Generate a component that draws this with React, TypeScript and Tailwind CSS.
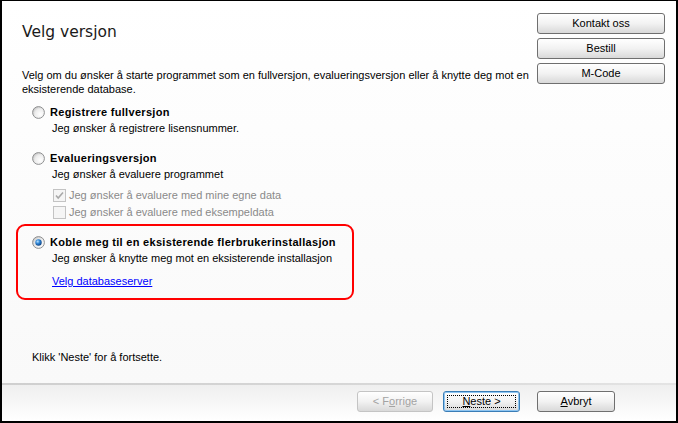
import React from "react";

const FONT = { fontFamily: '"Liberation Sans", Arial, sans-serif' };

function Radio({ checked, id }: { checked?: boolean; id: string }) {
  return (
    <svg width="13" height="13" viewBox="0 0 13 13" className="shrink-0">
      <defs>
        <radialGradient id={`rf-${id}`} cx="65%" cy="65%" r="75%">
          <stop offset="0" stopColor="#ffffff" />
          <stop offset="0.6" stopColor="#ececec" />
          <stop offset="1" stopColor="#bdbdbd" />
        </radialGradient>
        <radialGradient id={`rd-${id}`} cx="38%" cy="35%" r="70%">
          <stop offset="0" stopColor="#b8e2ff" />
          <stop offset="0.45" stopColor="#2f86d6" />
          <stop offset="1" stopColor="#0c3d7a" />
        </radialGradient>
      </defs>
      <circle cx="6.5" cy="6.5" r="5.9" fill={`url(#rf-${id})`} stroke="#8f9091" strokeWidth="1" />
      {checked && <circle cx="6.5" cy="6.5" r="3.2" fill={`url(#rd-${id})`} />}
    </svg>
  );
}

function Check({ checked }: { checked?: boolean }) {
  return (
    <svg width="13" height="13" viewBox="0 0 13 13" className="shrink-0">
      <rect x="0.5" y="0.5" width="12" height="12" fill="#f5f5f5" stroke="#c3c3c3" />
      {checked && (
        <path d="M3 6.5 L5.2 9 L10 3.5" fill="none" stroke="#a8a8a8" strokeWidth="1.6" />
      )}
    </svg>
  );
}

function Btn({
  children,
  w,
  disabled,
  def,
}: {
  children: React.ReactNode;
  w: string;
  disabled?: boolean;
  def?: boolean;
}) {
  const border = disabled
    ? "border-[#c4c4c4] text-[#a3a3a3]"
    : def
    ? "border-[#3a7db6] text-black shadow-[inset_0_0_0_1px_#8fc6f2]"
    : "border-[#6f6f6f] text-black";
  return (
    <div
      className={`${w} h-[21px] rounded-[3px] border ${border} bg-linear-to-b from-[#ffffff] via-[#f2f2f2] to-[#d9d9d9] flex items-center justify-center text-[11px] relative`}
      style={FONT}
    >
      {def && (
        <div className="absolute left-[3px] right-[3px] top-[3px] bottom-[3px] border border-dotted border-black" />
      )}
      <span className="relative">{children}</span>
    </div>
  );
}

export default function App() {
  return (
    <div
      className="w-[678px] h-[423px] border-black border-l-2 border-t border-r-2 border-b-2 flex flex-col bg-white text-black text-[11px]"
      style={FONT}
    >
      <div className="flex-1 flex bg-linear-to-b from-[#ffffff] to-[#f9f9f9]">
        <div className="flex-1 flex flex-col pl-[20px]">
          <div
            className="mt-[19px] h-[24px] leading-[24px] text-[#1a1a1a]"
            style={{ fontFamily: '"DejaVu Sans", sans-serif', fontSize: "15.5px" }}
          >
            Velg versjon
          </div>
          <div className="mt-[24px] leading-[14px] w-[510px]">
            Velg om du ønsker å starte programmet som en fullversjon, evalueringsversjon eller å knytte deg mot en
            <br />
            eksisterende database.
          </div>

          <div className="mt-[9px] h-[14px] flex items-center pl-[10px] gap-[5px]">
            <Radio id="r1" />
            <span className="font-bold leading-[14px] tracking-[0.3px]">Registrere fullversjon</span>
          </div>
          <div className="mt-[2px] h-[14px] leading-[14px] pl-[30px]">
            Jeg ønsker å registrere lisensnummer.
          </div>

          <div className="mt-[16px] h-[14px] flex items-center pl-[10px] gap-[5px]">
            <Radio id="r2" />
            <span className="font-bold leading-[14px] tracking-[0.3px]">Evalueringsversjon</span>
          </div>
          <div className="mt-[2px] h-[14px] leading-[14px] pl-[30px]">
            Jeg ønsker å evaluere programmet
          </div>
          <div className="mt-[7px] h-[14px] flex items-center pl-[31px] gap-[3px] text-[#8a8a8a]">
            <Check checked />
            <span className="leading-[14px]">Jeg ønsker å evaluere med mine egne data</span>
          </div>
          <div className="mt-[3px] h-[14px] flex items-center pl-[31px] gap-[3px] text-[#8a8a8a]">
            <Check />
            <span className="leading-[14px]">Jeg ønsker å evaluere med eksempeldata</span>
          </div>

          <div className="mt-[5px] ml-[-6px] w-[338px] h-[76px] border-2 border-[#ff0000] rounded-[9px] flex flex-col pl-[14px] pt-[9px]">
            <div className="h-[14px] flex items-center gap-[5px]">
              <Radio id="r3" checked />
              <span className="font-bold leading-[14px] tracking-[0.3px]">
                Koble meg til en eksisterende flerbrukerinstallasjon
              </span>
            </div>
            <div className="mt-[2px] h-[14px] leading-[14px] pl-[20px]">
              Jeg ønsker å knytte meg mot en eksisterende installasjon
            </div>
            <div className="mt-[9px] h-[14px] leading-[14px] pl-[20px]">
              <span className="text-[#0000ff] underline">Velg databaseserver</span>
            </div>
          </div>

          <div className="mt-auto mb-[19px] h-[14px] leading-[14px] pl-[10px]">
            Klikk 'Neste' for å fortsette.
          </div>
        </div>

        <div className="w-[128px] mr-[11px] mt-[12px] flex flex-col gap-[4px]">
          <Btn w="w-[128px]">Kontakt oss</Btn>
          <Btn w="w-[128px]">Bestill</Btn>
          <Btn w="w-[128px]">M-Code</Btn>
        </div>
      </div>

      <div className="h-[2px] bg-linear-to-r from-[#cfcfcf] via-[#d6d6d6] to-[#e4e4e4]" />
      <div className="h-[36px] bg-linear-to-b from-[#efefef] to-[#ffffff] flex justify-end pt-[6px] pr-[61px]">
        <Btn w="w-[76px]" disabled>
          &lt; F<u>o</u>rrige
        </Btn>
        <div className="w-[10px]" />
        <Btn w="w-[77px]" def>
          <u>N</u>este &gt;
        </Btn>
        <div className="w-[17px]" />
        <Btn w="w-[78px]">
          <u>A</u>vbryt
        </Btn>
      </div>
    </div>
  );
}
